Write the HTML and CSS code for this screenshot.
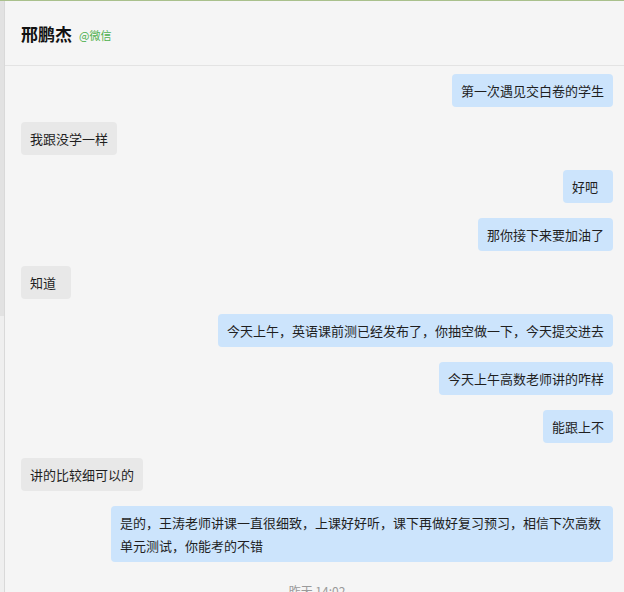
FILE: index.html
```html
<!DOCTYPE html>
<html lang="zh-CN">
<head>
    <meta charset="utf-8">
    <title>邢鹏杰</title>
    <link rel="stylesheet" href="styles.css">
</head>
<body>
    <div class="window">
        <div class="side"></div>
        <div class="main">
            <div class="header">
                <span class="name">邢鹏杰</span>
                <span class="source">@微信</span>
            </div>
            <div class="messages">
                <div class="msg mine">第一次遇见交白卷的学生</div>
                <div class="msg other">我跟没学一样</div>
                <div class="msg mine">好吧</div>
                <div class="msg mine">那你接下来要加油了</div>
                <div class="msg other">知道</div>
                <div class="msg mine">今天上午，英语课前测已经发布了，你抽空做一下，今天提交进去</div>
                <div class="msg mine">今天上午高数老师讲的咋样</div>
                <div class="msg mine">能跟上不</div>
                <div class="msg other">讲的比较细可以的</div>
                <div class="msg mine">是的，王涛老师讲课一直很细致，上课好好听，课下再做好复习预习，相信下次高数单元测试，你能考的不错</div>
                <div class="time">昨天 14:02</div>
            </div>
        </div>
    </div>
</body>
</html>
```

FILE: styles.css
```css
body {
    margin: 0;
    padding: 0;
    background: #f5f5f5;
    font-family: "Noto Sans CJK SC", "Noto Sans", sans-serif;
    color: #1f1f1f;
    overflow: hidden;
}
.window {
    display: flex;
    height: 592px;
    border-top: 1px solid #a9c08c;
    box-sizing: border-box;
}
.side {
    width: 4px;
    flex-shrink: 0;
    border-right: 1px solid #d9d9d9;
    background: linear-gradient(to bottom, #e2e2e2 0, #e2e2e2 315px, #efefef 315px);
}
.main {
    flex: 1;
    min-width: 0;
}
.header {
    height: 65px;
    box-sizing: border-box;
    border-bottom: 1px solid #e3e3e3;
    padding-left: 16px;
    display: flex;
    align-items: center;
    gap: 7px;
}
.name {
    font-size: 17px;
    font-weight: bold;
    color: #111;
}
.source {
    font-size: 11px;
    color: #4cb04c;
    margin-top: 3px;
}
.messages {
    display: flex;
    flex-direction: column;
    gap: 15px;
    padding: 8px 11px 0 16px;
}
.msg {
    font-size: 13px;
    line-height: 23px;
    padding: 5px 9px;
    border-radius: 4px;
    min-width: 50px;
    max-width: 502px;
    box-sizing: border-box;
}
.mine {
    align-self: flex-end;
    background: #cce4fc;
}
.other {
    align-self: flex-start;
    background: #e8e8e8;
}
.time {
    align-self: center;
    font-size: 12px;
    line-height: 16px;
    color: #9a9a9a;
    margin-top: 6px;
}
```
